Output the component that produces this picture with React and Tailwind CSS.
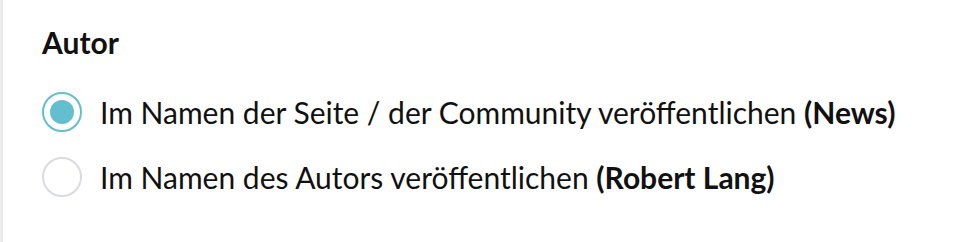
export default function App() {
  return (
    <div className="flex h-[242px] w-[970px] bg-white" style={{ fontFamily: "Lato, 'Noto Sans', sans-serif" }}>
      <div className="w-[3px] bg-[#ebebf0]" />
      <div className="flex flex-col pl-[39px] pt-[24px] text-[#111]">
        <h2 className="text-[30px] font-bold leading-[36px]">Autor</h2>
        <div className="mt-[32px] flex flex-col gap-[25px]">
          <label className="flex items-center gap-[18px]">
            <span className="flex h-[40px] w-[40px] items-center justify-center rounded-full border-[2px] border-[#63bfcd]">
              <span className="h-[24px] w-[24px] rounded-full bg-[#63bfcd]" />
            </span>
            <span className="text-[30px] leading-[40px]">
              Im Namen der Seite / der Community veröffentlichen <b className="font-bold">(News)</b>
            </span>
          </label>
          <label className="flex items-center gap-[18px]">
            <span className="h-[40px] w-[40px] rounded-full border-[2px] border-[#d9dbe0]" />
            <span className="text-[30px] leading-[40px]">
              Im Namen des Autors veröffentlichen <b className="font-bold">(Robert Lang)</b>
            </span>
          </label>
        </div>
      </div>
    </div>
  );
}
